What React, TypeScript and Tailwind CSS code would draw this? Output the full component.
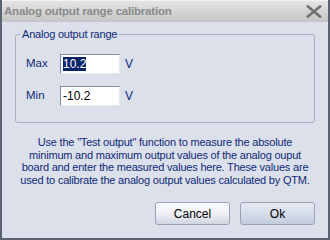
import React from 'react';

const font = { fontFamily: '"Liberation Sans", Arial, sans-serif' };

const App: React.FC = () => {
  return (
    <div
      className="w-[330px] h-[240px] flex flex-col bg-[#dce0ea] border-x-2 border-b-2 border-[#5b6274] overflow-hidden"
      style={font}
    >
      {/* Title bar */}
      <div className="h-[22px] shrink-0 flex items-center justify-between pl-[2px] pr-[6px] bg-gradient-to-b from-[#e4e4e4] to-[#c4c4c4] border-t border-[#f2f2f2]">
        <span className="text-[11.5px] font-bold text-[#8a8a8a] tracking-[-0.2px] whitespace-nowrap">
          Analog output range calibration
        </span>
        <svg width="16" height="13" viewBox="0 0 16 13">
          <path d="M2 1.5 L14 11.5 M14 1.5 L2 11.5" stroke="#707070" strokeWidth="2.6" strokeLinecap="square" />
        </svg>
      </div>

      {/* Body */}
      <div className="flex-1 flex flex-col px-[13px] pt-[6px] text-[11px] text-[#0f2a78]">
        <fieldset className="h-[95px] border border-[#a9b0be] rounded-[3px] px-[4px] pt-[14px] mx-0 min-w-0">
          <legend className="px-[2px] text-[11px] leading-[12px] tracking-[-0.2px] text-[#0f2a78]">Analog output range</legend>
          <div className="flex items-center ml-[6px]">
            <span className="w-[34px] text-[11.5px]">Max</span>
            <div className="w-[60px] h-[20px] bg-white border border-[#7f8a9e] border-r-[#e8e8e8] border-b-[#e8e8e8] flex items-center px-[2px]">
              <span className="bg-[#0a246a] text-white text-[12px] leading-[14px]">10.2</span>
            </div>
            <span className="ml-[5px] text-[12px]">V</span>
          </div>
          <div className="flex items-center ml-[6px] mt-[12px]">
            <span className="w-[34px] text-[11.5px]">Min</span>
            <div className="w-[60px] h-[20px] bg-white border border-[#7f8a9e] border-r-[#e8e8e8] border-b-[#e8e8e8] flex items-center px-[2px]">
              <span className="text-black text-[12px] leading-[14px]">-10.2</span>
            </div>
            <span className="ml-[5px] text-[12px]">V</span>
          </div>
        </fieldset>

        <p className="mt-[13px] -mx-[8px] whitespace-nowrap text-center text-[11px] leading-[12.5px] tracking-[-0.2px] text-[#0f2a78]">
          Use the "Test output" function to measure the absolute
          <br />
          minimum and maximum output values of the analog ouput
          <br />
          board and enter the measured values here. These values are
          <br />
          used to calibrate the analog output values calculated by QTM.
        </p>

        <div className="flex justify-end gap-[10px] mt-[16px]">
          <button className="w-[75px] h-[23px] rounded-[3px] border border-[#9aa3b4] bg-gradient-to-b from-[#fafbfd] via-[#eef0f5] to-[#d0d6e2] text-[12px] text-black">
            Cancel
          </button>
          <button className="w-[75px] h-[23px] rounded-[3px] border border-[#9aa3b4] bg-gradient-to-b from-[#e6eaf2] via-[#d6dcea] to-[#c3cbdc] text-[12px] text-black">
            Ok
          </button>
        </div>
      </div>
    </div>
  );
};

export default App;
